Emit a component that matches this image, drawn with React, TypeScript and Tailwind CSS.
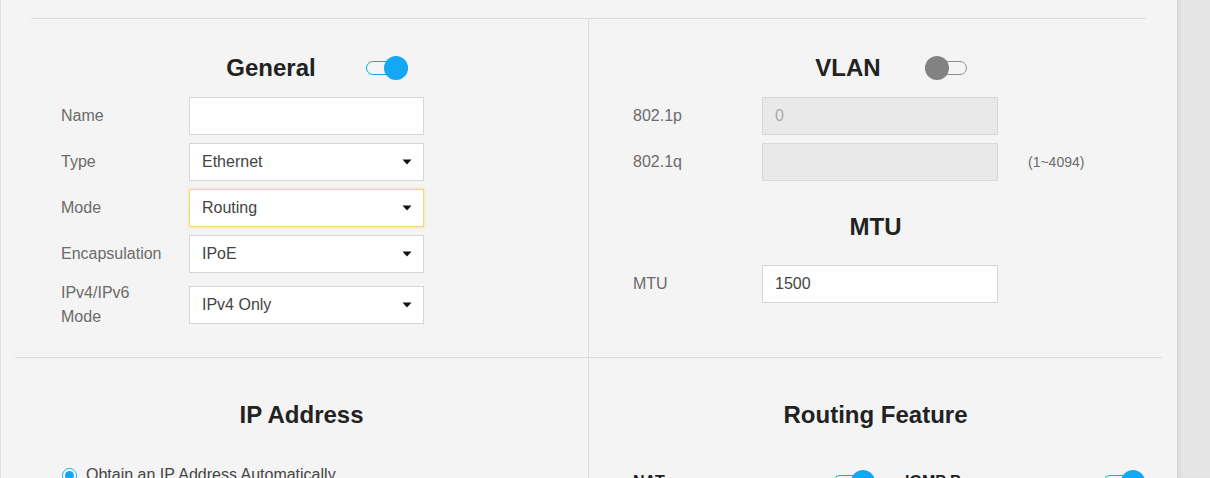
const FONT = "font-['Liberation_Sans',Arial,sans-serif]";

function Toggle({ on }: { on: boolean }) {
  return (
    <span className="relative inline-flex h-[24px] w-[42px] shrink-0 items-center">
      <span
        className={`h-[14px] w-full rounded-full border-[1.5px] ${on ? 'border-[#14a7f3]' : 'border-[#8c8c8c]'}`}
      />
      <span
        className={`absolute top-0 h-[24px] w-[24px] rounded-full ${on ? 'right-0 bg-[#14a7f3]' : 'left-0 bg-[#828282]'}`}
      />
    </span>
  );
}

function Heading({ title, toggle, gap }: { title: string; toggle?: boolean; gap?: string }) {
  return (
    <div className={`flex h-[40px] items-center justify-center ${toggle !== undefined ? 'pl-[31px]' : ''} ${gap ?? ''}`}>
      <h2 className="text-[24px] font-bold text-[#222]">{title}</h2>
      {toggle !== undefined && <Toggle on={toggle} />}
    </div>
  );
}

function Arrow() {
  return (
    <svg width="10" height="6" viewBox="0 0 10 6" className="shrink-0">
      <path d="M0.5 0.5h9L5 5.5z" fill="#111" />
    </svg>
  );
}

type Field = {
  label: React.ReactNode;
  value?: string;
  select?: boolean;
  focus?: boolean;
  disabled?: boolean;
  hint?: string;
};

function Row({ f, right }: { f: Field; right?: boolean }) {
  const box = f.disabled
    ? 'bg-[#e9e9e9] border-[#d8d8d8] text-[#aaa]'
    : f.focus
      ? 'bg-white border-[#f3d77c] shadow-[0_0_3px_#f6dd8a] text-[#444]'
      : 'bg-white border-[#d3d7dc] text-[#444]';
  return (
    <div className="flex min-h-[38px] items-center">
      <div className={`${right ? 'w-[129px]' : 'w-[128px]'} shrink-0 text-[16px] leading-[24px] text-[#6b6b6b]`}>
        {f.label}
      </div>
      <div
        className={`flex h-[38px] ${right ? 'w-[236px]' : 'w-[235px]'} items-center justify-between border pl-[12px] pr-[11px] text-[16px] ${box}`}
      >
        <span>{f.value}</span>
        {f.select && <Arrow />}
      </div>
      {f.hint && <span className="ml-[30px] text-[14px] text-[#6b6b6b]">{f.hint}</span>}
    </div>
  );
}

const general: Field[] = [
  { label: 'Name', value: '' },
  { label: 'Type', value: 'Ethernet', select: true },
  { label: 'Mode', value: 'Routing', select: true, focus: true },
  { label: 'Encapsulation', value: 'IPoE', select: true },
  { label: <>IPv4/IPv6<br />Mode</>, value: 'IPv4 Only', select: true },
];

const vlan: Field[] = [
  { label: '802.1p', value: '0', disabled: true },
  { label: '802.1q', value: '', disabled: true, hint: '(1~4094)' },
];

export default function App() {
  return (
    <div className={`flex h-[478px] w-[1210px] overflow-hidden ${FONT}`}>
      <div className="w-[1177px] shrink-0 border-l border-[#e0e0e0] bg-[#f4f4f4] pt-[18px]">
        <div className="ml-[30px] h-px w-[1115px] bg-[#dcdcdc]" />
        <div className="ml-[14px] grid w-[1147px] grid-cols-[574px_573px]">
          {/* General */}
          <div className="border-r border-b border-[#dcdcdc] pl-[46px] pt-[29px] pb-[28px]">
            <div className="pr-[46px]">
              <Heading title="General" toggle={true} gap="gap-[50px]" />
            </div>
            <div className="mt-[9px] flex flex-col gap-[8px]">
              {general.map((f, i) => (
                <Row key={i} f={f} />
              ))}
            </div>
          </div>

          {/* VLAN + MTU */}
          <div className="border-b border-[#dcdcdc] pl-[44px] pt-[29px]">
            <div className="pr-[44px]">
              <Heading title="VLAN" toggle={false} gap="gap-[44px]" />
            </div>
            <div className="mt-[9px] flex flex-col gap-[8px]">
              {vlan.map((f, i) => (
                <Row key={i} f={f} right />
              ))}
            </div>
            <div className="mt-[26px] pr-[44px]">
              <Heading title="MTU" />
            </div>
            <div className="mt-[18px]">
              <Row f={{ label: 'MTU', value: '1500' }} right />
            </div>
          </div>

          {/* IP Address */}
          <div className="border-r border-[#dcdcdc] pl-[47px] pt-[37px]">
            <div className="pr-[47px]">
              <Heading title="IP Address" />
            </div>
            <div className="mt-[28px] flex h-[24px] items-center gap-[9px] text-[16px] text-[#444]">
              <span className="flex h-[15px] w-[15px] items-center justify-center rounded-full border-[1.5px] border-[#14a7f3] bg-white">
                <span className="h-[9px] w-[9px] rounded-full bg-[#14a7f3]" />
              </span>
              <span>Obtain an IP Address Automatically</span>
            </div>
          </div>

          {/* Routing Feature */}
          <div className="pl-[44px] pt-[37px]">
            <div className="pr-[44px]">
              <Heading title="Routing Feature" />
            </div>
            <div className="mt-[35px] flex gap-[30px] text-[16px] font-bold text-[#222]">
              <div className="flex w-[242px] items-center justify-between">
                <span>NAT</span>
                <Toggle on={true} />
              </div>
              <div className="flex w-[240px] items-center justify-between">
                <span>IGMP Proxy</span>
                <Toggle on={true} />
              </div>
            </div>
          </div>
        </div>
      </div>
      <div className="flex-1 border-l border-[#d6d6d6] bg-[#e5e5e5] shadow-[inset_2px_0_2px_rgba(0,0,0,0.04)]" />
    </div>
  );
}
